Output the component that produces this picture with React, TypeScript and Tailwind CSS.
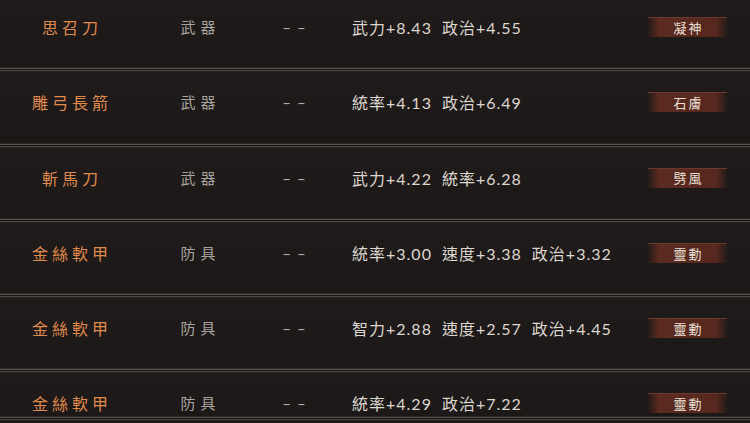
const rows = [
  { name: '思召刀', type: '武器', stats: ['武力+8.43', '政治+4.55'], badge: '凝神' },
  { name: '雕弓長箭', type: '武器', stats: ['統率+4.13', '政治+6.49'], badge: '石膚' },
  { name: '斬馬刀', type: '武器', stats: ['武力+4.22', '統率+6.28'], badge: '劈風' },
  { name: '金絲軟甲', type: '防具', stats: ['統率+3.00', '速度+3.38', '政治+3.32'], badge: '靈動' },
  { name: '金絲軟甲', type: '防具', stats: ['智力+2.88', '速度+2.57', '政治+4.45'], badge: '靈動' },
  { name: '金絲軟甲', type: '防具', stats: ['統率+4.29', '政治+7.22'], badge: '靈動' },
];

const cjk = "font-['Noto_Sans_CJK_TC','Noto_Sans_CJK_SC',serif]";
const num = "font-['Lato','Noto_Sans_CJK_TC',sans-serif]";

function Separator() {
  return (
    <div className="flex flex-col">
      <div className="h-px bg-[#2e2622]" />
      <div className="h-px bg-[#5a524c]" />
      <div className="h-px bg-[#161312]" />
      <div className="h-px bg-[#4d4641]" />
      <div className="h-px bg-[#2a2320]" />
    </div>
  );
}

function Row({ item, last }: { item: (typeof rows)[number]; last?: boolean }) {
  return (
    <div className={`${last ? 'h-[42.5px]' : 'h-[70.25px]'} flex items-start pt-[19px] bg-gradient-to-b from-[#1e1b1a] to-[#1b1817]`}>
      <div className={`w-[140px] text-center text-[16px] leading-[22px] tracking-[4px] pl-[4px] text-[#e08a4c] ${cjk}`}>
        {item.name}
      </div>
      <div className={`w-[116px] text-center text-[15px] leading-[22px] tracking-[5px] pl-[5px] text-[#aaa49e] ${cjk}`}>
        {item.type}
      </div>
      <div className={`w-[76px] text-center text-[15px] leading-[22px] text-[#b3ada6] ${num}`}>
        <span className="tracking-[6px] pl-[6px]">––</span>
      </div>
      <div className="flex-1 pl-[20px] flex gap-[10px] text-[#ddd7cf] text-[16px] leading-[22px]">
        {item.stats.map((s) => (
          <span key={s} className={`${num} tracking-[1px]`}>
            <span className={cjk}>{s.slice(0, 2)}</span>
            {s.slice(2)}
          </span>
        ))}
      </div>
      <div className="w-[79px] h-[20px] mt-[1px] mr-[23px] flex items-center justify-center bg-[linear-gradient(90deg,rgba(80,36,26,0.15),#5b2a20_14%,#57281f_86%,rgba(80,36,26,0.15))] border-t border-[#6a3a2d]">
        <span className={`text-[13px] tracking-[2px] pl-[2px] text-[#e9e1d8] ${cjk}`}>{item.badge}</span>
      </div>
    </div>
  );
}

export default function App() {
  return (
    <div className="w-[750px] h-[423px] overflow-hidden bg-[#1c1918]">
      <div className="-mt-[3px]">
        {rows.map((item, i) => (
          <div key={i}>
            <Row item={item} last={i === rows.length - 1} />
            <Separator />
          </div>
        ))}
      </div>
    </div>
  );
}
